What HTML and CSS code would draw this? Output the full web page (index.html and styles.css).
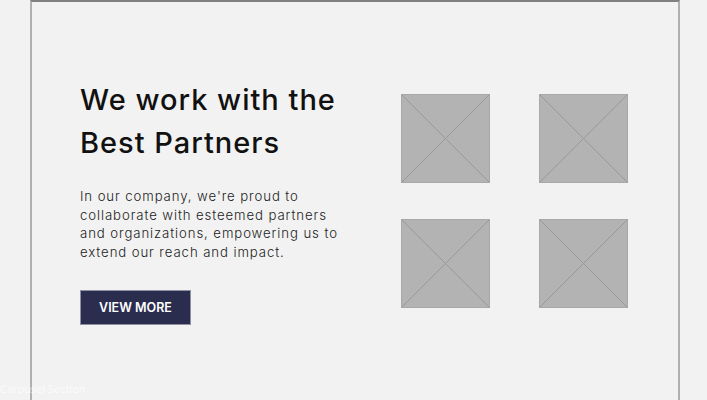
FILE: index.html
```html
<!DOCTYPE html>
<html>
<head>
<meta charset="utf-8">
<link rel="stylesheet" href="styles.css">
</head>
<body>
<div class="frame">
  <section class="content">
    <div class="intro">
      <h1 class="title">We work with the<br>Best Partners</h1>
      <p class="text">In our company, we're proud to<br>collaborate with esteemed partners<br>and organizations, empowering us to<br>extend our reach and impact.</p>
      <a class="btn" href="#">VIEW MORE</a>
    </div>
    <div class="logos">
      <div class="ph"><svg viewBox="0 0 89 89" preserveAspectRatio="none"><line x1="0" y1="0" x2="89" y2="89"/><line x1="89" y1="0" x2="0" y2="89"/></svg></div>
      <div class="ph"><svg viewBox="0 0 89 89" preserveAspectRatio="none"><line x1="0" y1="0" x2="89" y2="89"/><line x1="89" y1="0" x2="0" y2="89"/></svg></div>
      <div class="ph"><svg viewBox="0 0 89 89" preserveAspectRatio="none"><line x1="0" y1="0" x2="89" y2="89"/><line x1="89" y1="0" x2="0" y2="89"/></svg></div>
      <div class="ph"><svg viewBox="0 0 89 89" preserveAspectRatio="none"><line x1="0" y1="0" x2="89" y2="89"/><line x1="89" y1="0" x2="0" y2="89"/></svg></div>
    </div>
  </section>
</div>
<div class="label">Carousel Section</div>
</body>
</html>
```

FILE: styles.css
```css
html, body {
  margin: 0;
  padding: 0;
  background: #f2f2f2;
  height: 400px;
  overflow: hidden;
}
body {
  font-family: "Open Sans", "Noto Sans", sans-serif;
  position: relative;
}
.frame {
  margin-left: 30px;
  width: 646px;
  height: 398px;
  border-left: 2px solid #b0b0b0;
  border-right: 2px solid #b0b0b0;
  border-top: 2px solid #808080;
  box-sizing: content-box;
}
.content {
  display: flex;
  align-items: flex-start;
  padding: 76px 0 0 48px;
}
.intro {
  width: 290px;
  margin-right: 31px;
}
.title {
  margin: 0;
  font-family: "Inter", sans-serif;
  font-weight: 500;
  font-size: 29px;
  line-height: 43px;
  color: #111;
  letter-spacing: 1px;
}
.text {
  margin: 23px 0 0;
  font-family: "Inter", sans-serif;
  font-size: 13.2px;
  line-height: 18.7px;
  color: #222;
  font-weight: 300;
  letter-spacing: 0.9px;
  white-space: nowrap;
}
.btn {
  display: inline-flex;
  align-items: center;
  justify-content: center;
  margin-top: 28px;
  width: 111px;
  height: 35px;
  background: #2b2d4f;
  color: #fff;
  font-family: "Inter", sans-serif;
  font-weight: 600;
  font-size: 12.5px;
  text-decoration: none;
  border: 1px solid #8f90a3;
  box-sizing: border-box;
}
.logos {
  display: grid;
  grid-template-columns: 89px 89px;
  grid-auto-rows: 89px;
  column-gap: 49px;
  row-gap: 36px;
  margin-top: 16px;
}
.ph {
  background: #b3b3b3;
  border: 1px solid #a8a8a8;
  box-sizing: border-box;
}
.ph svg {
  display: block;
  width: 100%;
  height: 100%;
}
.ph line {
  stroke: #999;
  stroke-width: 1;
}
.label {
  position: absolute;
  left: 0;
  top: 381px;
  font-family: "Open Sans", sans-serif;
  font-size: 11px;
  color: #fbfbfb;
}
```
